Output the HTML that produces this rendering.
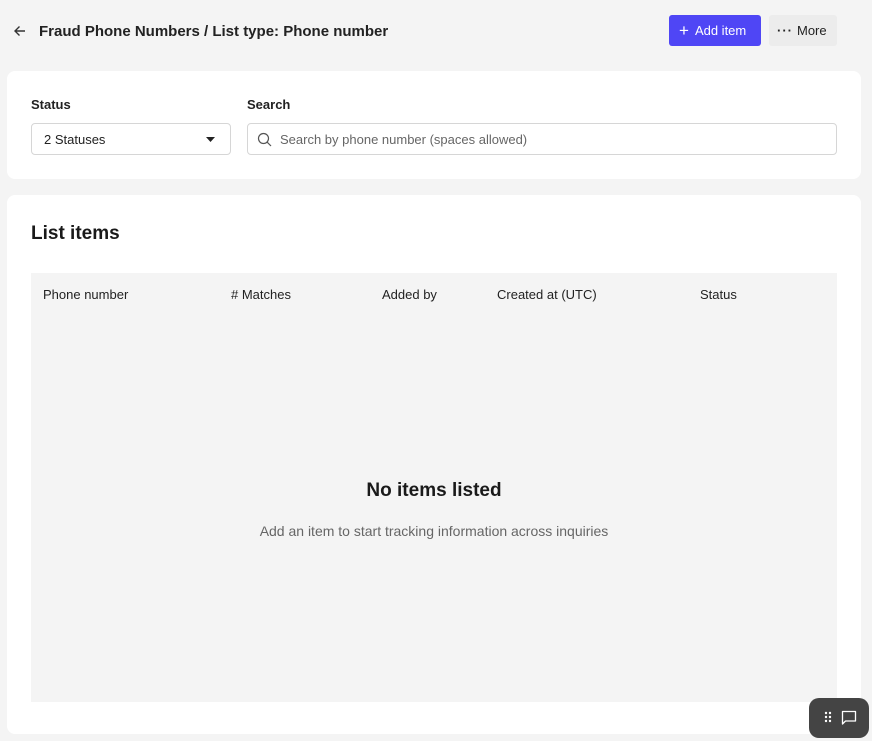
<!DOCTYPE html>
<html><head><style>
*{box-sizing:border-box;margin:0;padding:0}
body{width:872px;height:741px;background:#f4f4f4;font-family:"Liberation Sans",sans-serif;color:#1a1a1a;position:relative;overflow:hidden}
.abs{position:absolute}
.card{position:absolute;background:#fff;border-radius:8px;left:7px;width:854px}
.lbl{font-size:13px;font-weight:bold;color:#222}
.inp{position:absolute;border:1px solid #d6d6d6;border-radius:4px;background:#fff;height:32px;font-size:13px;display:flex;align-items:center}
.th{position:absolute;top:287px;font-size:13px;color:#222}
</style></head><body>
<svg class="abs" style="left:13px;top:24px" width="14" height="14" viewBox="0 0 14 14"><path d="M12 7H2M6.5 2.5L2 7l4.5 4.5" stroke="#333" stroke-width="1.4" fill="none"/></svg>
<div class="abs" style="left:39px;top:23px;font-size:15px;font-weight:bold;color:#222">Fraud Phone Numbers / List type: Phone number</div>
<div class="abs" style="left:669px;top:15px;width:92px;height:31px;background:#4f46f5;border-radius:3px;color:#fff;font-size:13px;display:flex;align-items:center;padding-left:10px"><span style="font-size:17px;margin-right:6px;line-height:1">+</span>Add item</div>
<div class="abs" style="left:769px;top:15px;width:68px;height:31px;background:#ececec;border-radius:3px;color:#222;font-size:13px;display:flex;align-items:center;padding-left:8px"><span style="letter-spacing:1px;margin-right:4px;font-weight:bold">···</span>More</div>

<div class="card" style="top:71px;height:108px"></div>
<div class="abs lbl" style="left:31px;top:97px">Status</div>
<div class="abs lbl" style="left:247px;top:97px">Search</div>
<div class="inp" style="left:31px;top:123px;width:200px;padding-left:12px;color:#222">2 Statuses
<svg class="abs" style="left:174px;top:13px" width="9" height="5"><path d="M0 0h9L4.5 5z" fill="#222"/></svg></div>
<div class="inp" style="left:247px;top:123px;width:590px;padding-left:32px;color:#666">Search by phone number (spaces allowed)
<svg class="abs" style="left:9px;top:8px" width="15" height="15" viewBox="0 0 15 15"><circle cx="6.5" cy="6.5" r="5" stroke="#555" stroke-width="1.2" fill="none"/><path d="M10.2 10.2L14 14" stroke="#555" stroke-width="1.2"/></svg></div>

<div class="card" style="top:195px;height:539px"></div>
<div class="abs" style="left:31px;top:223px;font-size:19px;font-weight:bold;color:#1a1a1a">List items</div>
<div class="abs" style="left:31px;top:273px;width:806px;height:429px;background:#f4f4f4"></div>
<div class="th" style="left:43px">Phone number</div>
<div class="th" style="left:231px"># Matches</div>
<div class="th" style="left:382px">Added by</div>
<div class="th" style="left:497px">Created at (UTC)</div>
<div class="th" style="left:700px">Status</div>
<div class="abs" style="left:31px;width:806px;top:480px;text-align:center;font-size:19px;font-weight:bold">No items listed</div>
<div class="abs" style="left:31px;width:806px;top:523px;text-align:center;font-size:14px;color:#666">Add an item to start tracking information across inquiries</div>

<div class="abs" style="left:809px;top:698px;width:60px;height:40px;background:#444;border-radius:10px"></div>
<svg class="abs" style="left:824px;top:711px" width="10" height="14"><g fill="#fff"><circle cx="2" cy="2" r="1.2"/><circle cx="6" cy="2" r="1.2"/><circle cx="2" cy="6" r="1.2"/><circle cx="6" cy="6" r="1.2"/><circle cx="2" cy="10" r="1.2"/><circle cx="6" cy="10" r="1.2"/></g></svg>
<svg class="abs" style="left:841px;top:710px" width="16" height="16" viewBox="0 0 16 16"><path d="M1.5 1.5h13v9.5h-10l-3 3z" stroke="#fff" stroke-width="1.3" fill="none" stroke-linejoin="round"/></svg>
</body></html>
